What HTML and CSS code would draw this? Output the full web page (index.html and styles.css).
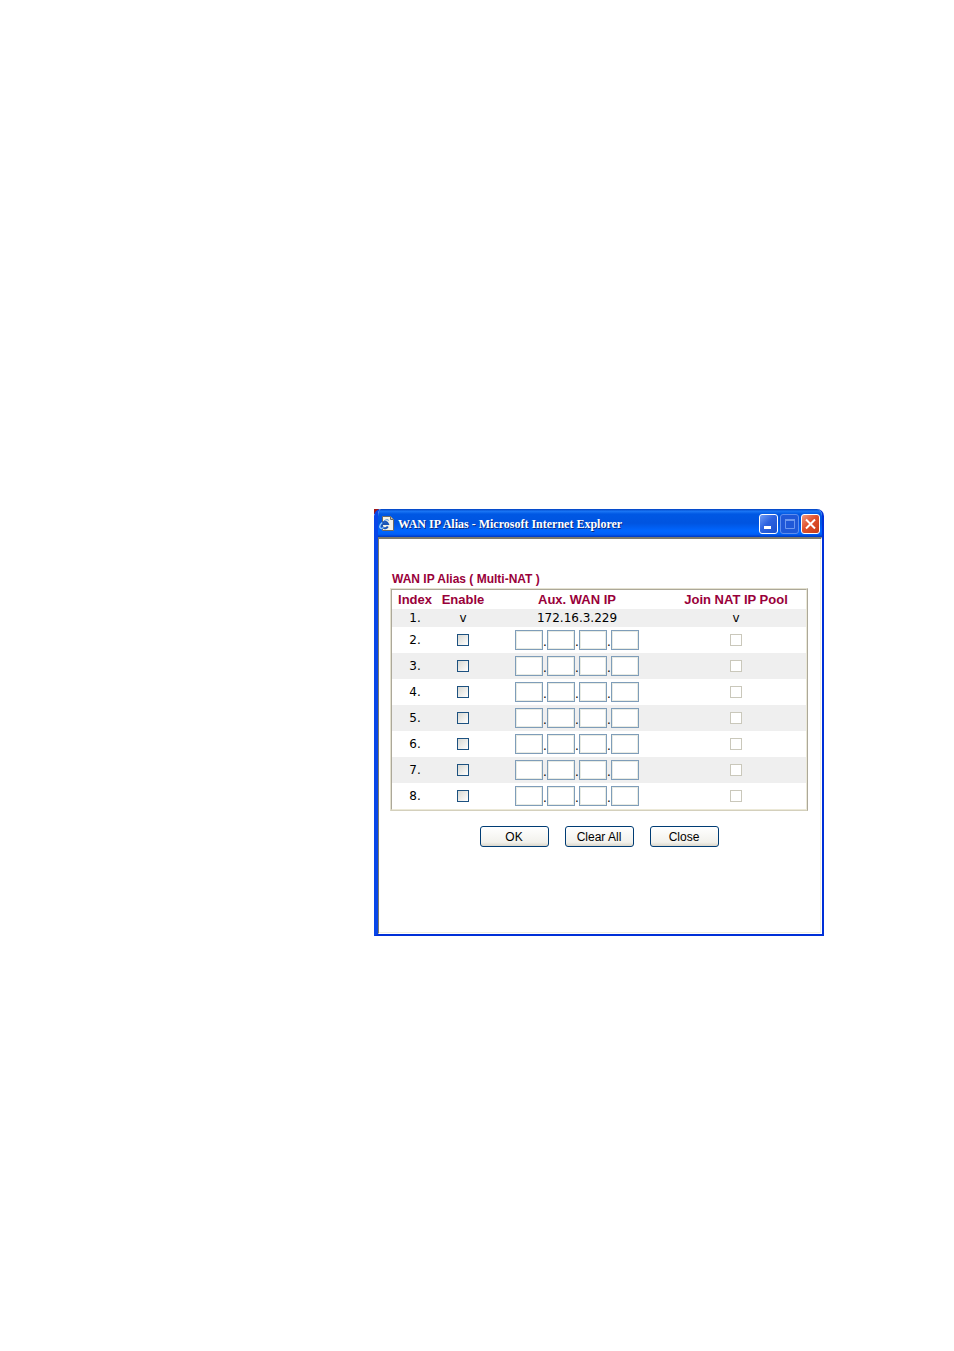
FILE: index.html
```
<!DOCTYPE html>
<html lang="en">
<head>
    <meta charset="UTF-8">
    <meta name="viewport" content="width=device-width, initial-scale=1.0">
    <title>WAN IP Alias</title>
    <link rel="stylesheet" href="styles.css">
    <script src="script.js" defer></script>
</head>
<body>
    <div class="window-corner">
    <div class="window">
        <header class="title-bar">
            <svg class="page-icon" viewBox="0 0 16 16" width="16" height="16" aria-hidden="true">
                <path d="M3.500 .5h8l3 3v11h-11z" fill="#f4f2e6" stroke="#6e6b62"/>
                <path d="M11.500 .5v3h3" fill="#c8c6ba" stroke="#6e6b62"/>
                <path d="M8.800 10.600a3.200 3.200 0 1 1 .2-2.600H4" fill="none" stroke="#1a56b8" stroke-width="2"/>
                <path d="M3.200 6.500C1.500 8 .3 10 1 11.500s2 1 3.500 0" fill="none" stroke="#8cc8ff" stroke-width="1.500"/>
                <path d="M5 5C7 3.500 9 3.200 9.800 4.500" fill="none" stroke="#4a8fe0"/>
            </svg>
            <span class="title-text">WAN IP Alias - Microsoft Internet Explorer</span>
            <div class="window-buttons">
                <button type="button" class="window-button" aria-label="Minimize">
                    <svg viewBox="0 0 17 18" width="17" height="18"><path d="M4 12.500h7" stroke="#fff" stroke-width="3"/></svg>
                </button>
                <button type="button" class="window-button maximize" aria-label="Maximize" disabled>
                    <svg viewBox="0 0 17 18" width="17" height="18"><path d="M4.500 5v8.500h9V5z" fill="none" stroke="#6c97ee"/><path d="M4 5h10" stroke="#6c97ee" stroke-width="2"/></svg>
                </button>
                <button type="button" class="window-button close" aria-label="Close window">
                    <svg viewBox="0 0 17 18" width="17" height="18"><path d="M4 4.500l9 9M13 4.500l-9 9" stroke="#fff" stroke-width="2"/></svg>
                </button>
            </div>
        </header>
        <main class="content">
            <form id="aliasForm">
                <h1>WAN IP Alias ( Multi-NAT )</h1>
                <div class="table-frame">
                    <table>
                        <thead>
                            <tr>
                                <th class="col-index">Index</th>
                                <th class="col-enable">Enable</th>
                                <th class="col-ip">Aux. WAN IP</th>
                                <th class="col-pool">Join NAT IP Pool</th>
                            </tr>
                        </thead>
                        <tbody id="aliasRows">
                            <tr class="first-row">
                                <td>1.</td>
                                <td>v</td>
                                <td>172.16.3.229</td>
                                <td>v</td>
                            </tr>
                        </tbody>
                    </table>
                </div>
                <div class="actions">
                    <button type="submit" class="form-button">OK</button>
                    <button type="reset" class="form-button">Clear All</button>
                    <button type="button" class="form-button">Close</button>
                </div>
            </form>
        </main>
    </div>
    </div>
</body>
</html>
```
FILE: styles.css
```
* {
    box-sizing: border-box;
}

body {
    margin: 0;
    padding: 509px 130px 40px 374px;
    background-color: #ffffff;
    font-family: "Liberation Sans", Arial, sans-serif;
    font-size: 12px;
}

.window-corner {
    min-width: 440px;
    background: linear-gradient(#a01818, #a01818) no-repeat 0 0 / 5px 5px;
}

.window {
    border: 2px solid #0030d8;
    border-top: none;
    border-left: 4px solid #0846e8;
    border-radius: 7px 7px 0 0;
    overflow: hidden;
    background-color: #ffffff;
}

.title-bar {
    display: flex;
    align-items: center;
    height: 28px;
    padding: 2px 2px 0 1px;
    background: linear-gradient(#0040c0 0%, #1a76f5 8%, #0058e4 18%, #0054e0 50%, #0066ff 78%, #0060f8 90%, #0038c0 100%);
}

.page-icon {
    flex: none;
    margin-right: 3px;
}

.title-text {
    flex: 1;
    color: #ffffff;
    font-family: "Liberation Serif", "Times New Roman", serif;
    font-size: 12px;
    font-weight: bold;
    text-shadow: 1px 1px #0a2a80;
    white-space: nowrap;
}

.window-buttons {
    display: flex;
    gap: 2px;
}

.window-button {
    width: 19px;
    height: 20px;
    padding: 0;
    border: 1px solid #ffffff;
    border-radius: 3px;
    background: linear-gradient(135deg, #6f9cf5, #2c62e0 45%, #1c50cc);
}

.window-button svg {
    display: block;
}

.window-button.maximize {
    border-color: #5f8eee;
    background: #1f58d8;
}

.window-button.close {
    background: linear-gradient(135deg, #f09a80, #e0502c 45%, #c83c18);
}

.content {
    height: 397px;
    padding: 33px 13px 0 11px;
    border-top: 2px solid #7c7a6c;
    border-left: 1px solid #7c7a6c;
    border-right: 1px solid #ffffff;
    border-bottom: 1px solid #ffffff;
    box-shadow: inset -1px -1px #f1efe2;
}

h1 {
    margin: 0;
    padding: 0 0 1px 2px;
    color: #99003a;
    font-size: 12px;
    line-height: 15px;
}

.table-frame {
    border: 1px solid #e4e1d0;
    border-right-color: #aca899;
    border-bottom-color: #d4d0bc;
}

table {
    width: 100%;
    border: 1px solid #aca899;
    border-right-color: #ece9d8;
    border-bottom-color: #ece9d8;
    border-collapse: separate;
    border-spacing: 0;
    table-layout: fixed;
}

th,
td {
    height: 26px;
    padding: 0;
    text-align: center;
}

th {
    height: 19px;
    color: #99003a;
    font-size: 13px;
    line-height: 19px;
    white-space: nowrap;
}

td {
    font-family: "DejaVu Sans", Verdana, sans-serif;
    font-size: 12px;
    line-height: 16px;
}

.first-row td {
    height: 18px;
}

tbody tr:nth-child(odd) {
    background-color: #efefef;
}

.col-index {
    width: 46px;
}

.col-enable {
    width: 50px;
}

.col-ip {
    width: 43%;
}

.ip-inputs {
    display: flex;
    justify-content: center;
    align-items: flex-end;
}

.ip-inputs span {
    width: 4px;
}

.ip-input {
    width: 28px;
    height: 20px;
    padding: 0 2px;
    border: 1px solid #7f9db9;
    background-color: #ffffff;
    box-shadow: inset 0 0 0 1px #e8ebe4;
    font-size: 12px;
    outline: none;
}

input[type="checkbox"] {
    appearance: none;
    display: block;
    width: 12px;
    height: 12px;
    margin: 0 auto;
    border: 1px solid #1d5281;
    background: linear-gradient(135deg, #d8d8d2, #ffffff);
}

input[type="checkbox"]:checked {
    background: #21a121;
}

input[type="checkbox"]:disabled {
    border-color: #cac8bb;
    background: #ffffff;
}

.actions {
    display: flex;
    justify-content: center;
    gap: 16px;
    margin-top: 15px;
}

.form-button {
    width: 69px;
    height: 21px;
    padding: 0;
    border: 1px solid #003c74;
    border-radius: 3px;
    background: linear-gradient(#ffffff, #f2f1ec 80%, #dcd8cc);
    color: #000000;
    font-family: inherit;
    font-size: 12px;
    line-height: 18px;
}
```
FILE: script.js
```
const rows = document.getElementById('aliasRows');

// Rows 2 to 8 are empty and editable
for (let index = 2; index <= 8; index++) {
    const row = document.createElement('tr');
    const inputs = [1, 2, 3, 4].map((part) =>
        `<input type="text" maxlength="3" class="ip-input" name="ip${index}_${part}" aria-label="Aux. WAN IP ${index}, part ${part}">`
    );
    row.innerHTML = `
        <td>${index}.</td>
        <td><input type="checkbox" class="enable" aria-label="Enable ${index}"></td>
        <td><div class="ip-inputs">${inputs.join('<span>.</span>')}</div></td>
        <td><input type="checkbox" class="pool" aria-label="Join NAT IP Pool ${index}" disabled></td>`;

    // The NAT pool can be joined only by an enabled alias
    const pool = row.querySelector('.pool');
    row.querySelector('.enable').addEventListener('change', (event) => {
        pool.disabled = !event.target.checked;
    });
    rows.appendChild(row);
}
```
